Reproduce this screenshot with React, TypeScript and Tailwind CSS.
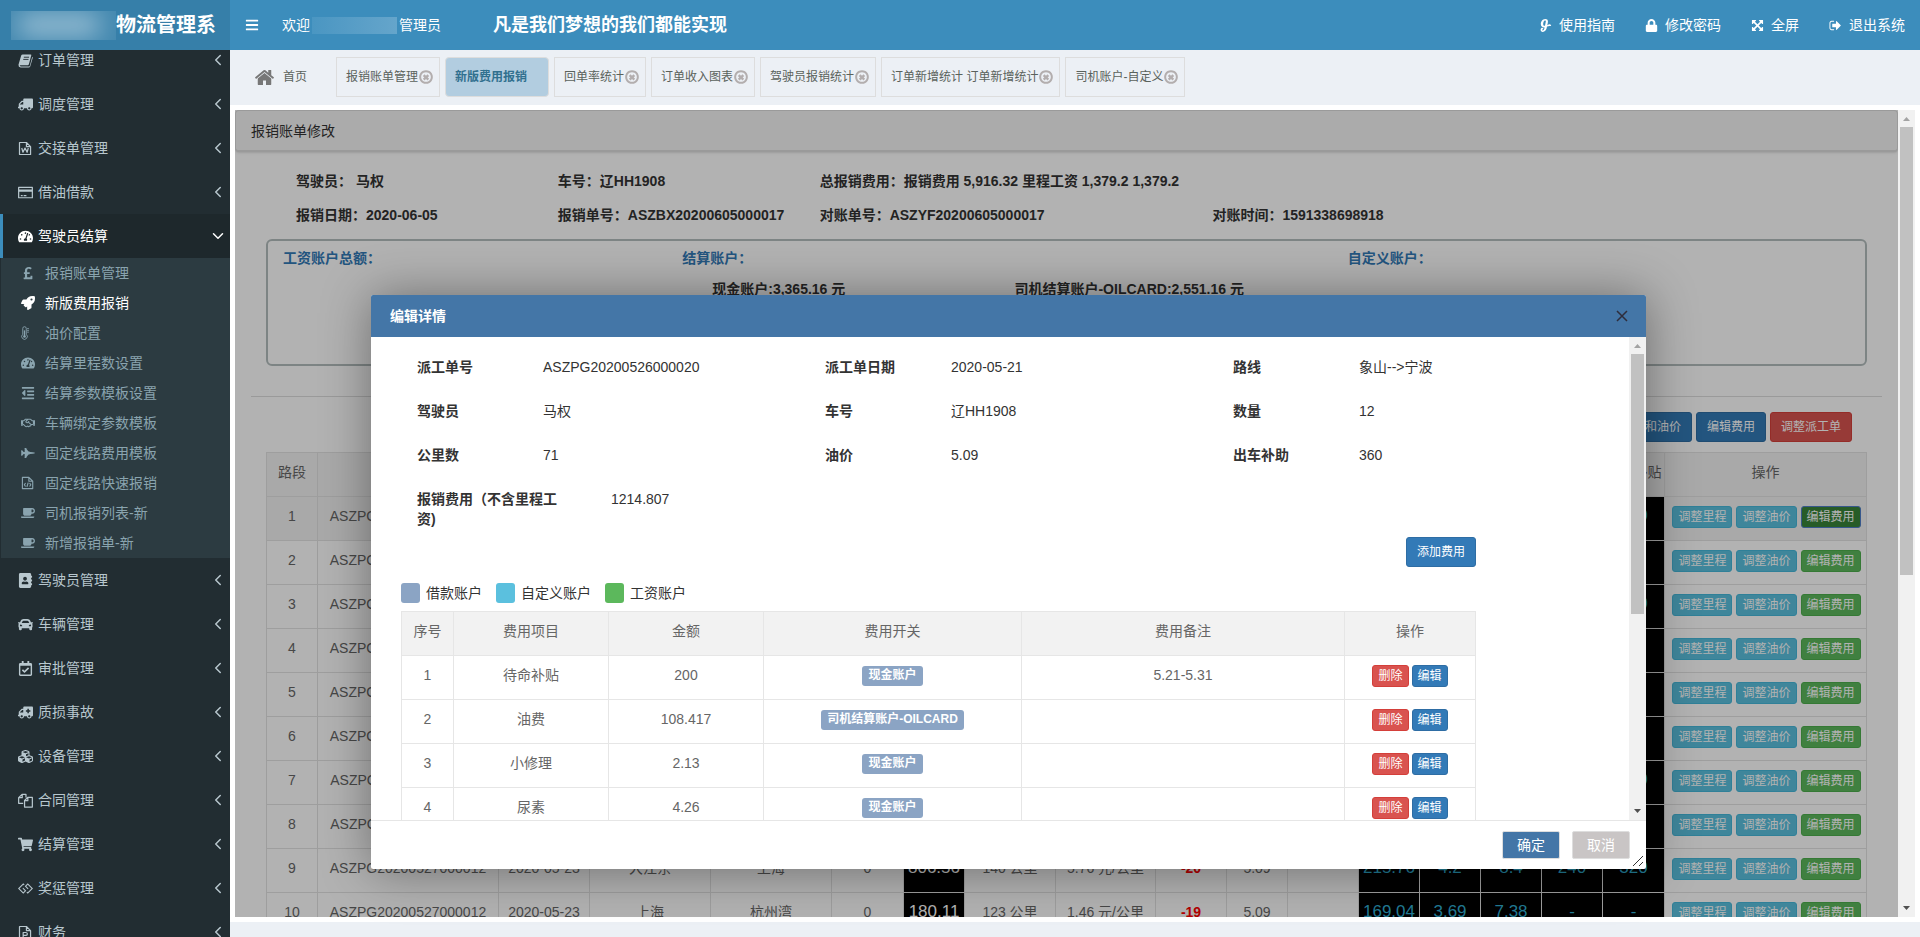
import type { ReactNode } from "react";
import {
  FaAddressBook,
  FaAmbulance,
  FaBars,
  FaCar,
  FaCoffee,
  FaCubes,
  FaFighterJet,
  FaGg,
  FaGlideG,
  FaLock,
  FaOutdent,
  FaPoundSign,
  FaRegCalendarCheck,
  FaRegHandshake,
  FaRocket,
  FaShoppingCart,
  FaTachometerAlt,
  FaTruck,
} from "react-icons/fa";
import { ChevronDown, ChevronLeft } from "lucide-react";

type IconProps = { className?: string };
type MenuItem = { label: string; icon: (props: IconProps) => ReactNode };

function SolidIcon({ className, d }: IconProps & { d: string }) {
  return (
    <svg viewBox="0 0 1792 1792" className={className} fill="currentColor" aria-hidden="true">
      <path d={d} />
    </svg>
  );
}

function LineIcon({ className, d }: IconProps & { d: string }) {
  return (
    <svg
      viewBox="0 0 16 16"
      className={className}
      fill="none"
      stroke="currentColor"
      strokeWidth="1.3"
      strokeLinejoin="round"
      aria-hidden="true"
    >
      <path d={d} />
    </svg>
  );
}

const HomeIcon = ({ className }: IconProps) => (
  <SolidIcon
    className={className}
    d="M1472 992v480q0 26-19 45t-45 19h-384v-384h-256v384h-384q-26 0-45-19t-19-45v-480q0-1 .5-3t.5-3l575-474 575 474q1 2 1 6zm223-69l-62 74q-8 9-21 11h-3q-13 0-21-7l-692-577-692 577q-12 8-24 7-13-2-21-11l-62-74q-8-10-7-23.500t11-21.500l719-599q32-26 76-26t76 26l244 204v-195q0-14 9-23t23-9h192q14 0 23 9t9 23v408l219 182q10 8 11 21.500t-7 23.500z"
  />
);

const CloseCircleIcon = ({ className }: IconProps) => (
  <SolidIcon
    className={className}
    d="M1225 1121l-146 146q-10 10-23 10t-23-10l-137-137-137 137q-10 10-23 10t-23-10l-146-146q-10-10-10-23t10-23l137-137-137-137q-10-10-10-23t10-23l146-146q10-10 23-10t23 10l137 137 137-137q10-10 23-10t23 10l146 146q10 10 10 23t-10 23l-137 137 137 137q10 10 10 23t-10 23zm215-225q0-148-73-273t-198-198-273-73-273 73-198 198-73 273 73 273 198 198 273 73 273-73 198-198 73-273zm224 0q0 209-103 385.500t-279.500 279.500-385.500 103-385.500-103-279.500-279.500-103-385.500 103-385.500 279.500-279.500 385.500-103 385.500 103 279.500 279.500 103 385.500z"
  />
);

const FullScreenIcon = ({ className }: IconProps) => (
  <SolidIcon
    className={className}
    d="M1411 541l-355 355 355 355 144-144q29-31 70-14 39 17 39 59v448q0 26-19 45t-45 19h-448q-42 0-59-40-17-39 14-69l144-144-355-355-355 355 144 144q31 30 14 69-17 40-59 40h-448q-26 0-45-19t-19-45v-448q0-42 40-59 39-17 69 14l144 144 355-355-355-355-144 144q-19 19-45 19-12 0-24-5-40-17-40-59v-448q0-26 19-45t45-19h448q42 0 59 40 17 39-14 69l-144 144 355 355 355-355-144-144q-31-30-14-69 17-40 59-40h448q26 0 45 19t19 45v448q0 42-39 59-13 5-25 5-26 0-45-19z"
  />
);

const SignOutIcon = ({ className }: IconProps) => (
  <SolidIcon
    className={className}
    d="M704 1440q0 4 1 20t.5 26.500-3 23.500-10 19.500-20.500 6.500h-320q-119 0-203.500-84.500t-84.500-203.500v-704q0-119 84.500-203.500t203.500-84.500h320q13 0 22.500 9.500t9.500 22.500q0 4 1 20t.5 26.500-3 23.500-10 19.500-20.500 6.500h-320q-66 0-113 47t-47 113v704q0 66 47 113t113 47h312l11.500 1 11.500 3 8 5.500 7 9 2 13.500zm928-544q0 26-19 45l-544 544q-19 19-45 19t-45-19-19-45v-288h-448q-26 0-45-19t-19-45v-384q0-26 19-45t45-19h448v-288q0-26 19-45t45-19 45 19l544 544q19 19 19 45z"
  />
);

const BookIcon = ({ className }: IconProps) => (
  <svg viewBox="0 0 16 16" className={className} aria-hidden="true">
    <path d="M5 1.500h8.500q1 0 .7 1L11.600 12q-.3 1-1.300 1H2.500q-.8 0-.5.7t1.200.8h8.200q.9 0 1.200-1L15.200 4q.8.5.5 1.400L13 14.300q-.4 1.200-1.600 1.200H2.800Q.3 15.200.5 12.500L3.400 2.700Q3.800 1.500 5 1.500z" fill="currentColor" />
    <path d="M6.200 4.500h5.600M5.600 6.800h5.600" stroke="#222d32" fill="none" />
  </svg>
);

const FileWordIcon = ({ className }: IconProps) => (
  <LineIcon className={className} d="M1.600 1.600h7.400l4.400 4.400v8.400H1.600zM9 1.600V6h4.400M4 7.500l1.300 4.500 2.200-4.500 2.200 4.500L11 7.500" />
);

const FileCodeIcon = ({ className }: IconProps) => (
  <LineIcon className={className} d="M1.600 1.600h7.400l4.400 4.400v8.400H1.600zM9 1.600V6h4.400M5.200 8L3.800 10l1.400 2M9.800 8l1.400 2-1.400 2M8.200 7.500l-1.400 5" />
);

const FileMoneyIcon = ({ className }: IconProps) => (
  <LineIcon className={className} d="M1.600 1.600h7.400l4.400 4.400v8.400H1.600zM9 1.600V6h4.400M5.500 13V8h3q1.500.2 1.500 1.500T8.500 11h-3" />
);

const CardIcon = ({ className }: IconProps) => (
  <LineIcon className={className} d="M.7 2.600h14.600v11H.7zM.7 5.500h14.600M.7 6.500h14.600M3 11.300h2M6 11.300h3" />
);

const CopyIcon = ({ className }: IconProps) => (
  <LineIcon className={className} d="M5.500 11H.7V5l3.600-3.600h4.200v3.400M4.500 1.600V5H.8M7 15V8l3.300-3.300h5V15zM10.500 4.800V8.200H7" />
);

const ThermometerIcon = ({ className }: IconProps) => (
  <svg viewBox="0 0 16 16" className={className} fill="none" stroke="currentColor" aria-hidden="true">
    <path d="M2 9.500V2.800a2 2 0 0 1 4 0v6.700a3.200 3.200 0 1 1-4 0zM7 3h2M7 5h2M7 7h2" />
    <path d="M4 5v7" strokeWidth="1.500" />
    <circle cx="4" cy="12" r="1.500" fill="currentColor" stroke="none" />
  </svg>
);

// delivery vehicles drive to the left in the menu
const TruckIcon = ({ className }: IconProps) => <FaTruck className={`${className} -scale-x-100`} />;
const AmbulanceIcon = ({ className }: IconProps) => (
  <FaAmbulance className={`${className} -scale-x-100`} />
);

const MENU_TOP: MenuItem[] = [
  { label: "订单管理", icon: BookIcon },
  { label: "调度管理", icon: TruckIcon },
  { label: "交接单管理", icon: FileWordIcon },
  { label: "借油借款", icon: CardIcon },
];

const SUBMENU: MenuItem[] = [
  { label: "报销账单管理", icon: FaPoundSign },
  { label: "新版费用报销", icon: FaRocket },
  { label: "油价配置", icon: ThermometerIcon },
  { label: "结算里程数设置", icon: FaTachometerAlt },
  { label: "结算参数模板设置", icon: FaOutdent },
  { label: "车辆绑定参数模板", icon: FaRegHandshake },
  { label: "固定线路费用模板", icon: FaFighterJet },
  { label: "固定线路快速报销", icon: FileCodeIcon },
  { label: "司机报销列表-新", icon: FaCoffee },
  { label: "新增报销单-新", icon: FaCoffee },
];

const MENU_BOTTOM: MenuItem[] = [
  { label: "驾驶员管理", icon: FaAddressBook },
  { label: "车辆管理", icon: FaCar },
  { label: "审批管理", icon: FaRegCalendarCheck },
  { label: "质损事故", icon: AmbulanceIcon },
  { label: "设备管理", icon: FaCubes },
  { label: "合同管理", icon: CopyIcon },
  { label: "结算管理", icon: FaShoppingCart },
  { label: "奖惩管理", icon: FaGg },
  { label: "财务", icon: FileMoneyIcon },
];

const HEADER_LINKS: MenuItem[] = [
  { label: "使用指南", icon: FaGlideG },
  { label: "修改密码", icon: FaLock },
  { label: "全屏", icon: FullScreenIcon },
  { label: "退出系统", icon: SignOutIcon },
];

const TABS = [
  "报销账单管理",
  "新版费用报销",
  "回单率统计",
  "订单收入图表",
  "驾驶员报销统计",
  "订单新增统计 订单新增统计",
  "司机账户-自定义",
];

const ACTIVE = "新版费用报销";

const TRIP_COLUMNS = [
  { title: "路段", width: "w-[51px]" },
  { title: "派工单号", width: "w-[181px]" },
  { title: "派工日期", width: "w-[91px]" },
  { title: "起点", width: "w-[121px]" },
  { title: "终点", width: "w-[121px]" },
  { title: "数量", width: "w-[72px]" },
  { title: "费用", width: "w-[61px]" },
  { title: "里程", width: "w-[91px]" },
  { title: "单价", width: "w-[100px]" },
  { title: "差额", width: "w-[71px]" },
  { title: "油价", width: "w-[61px]" },
  { title: "备注", width: "w-[71px]" },
  { title: "油费", width: "w-[61px]" },
  { title: "尿素", width: "w-[61px]" },
  { title: "小修理", width: "w-[61px]" },
  { title: "补贴", width: "w-[61px]" },
  { title: "出车补贴", width: "w-[62px]" },
  { title: "操作", width: "" },
];

const DARK_COLUMNS = [6, 12, 13, 14, 15, 16];

const TRIPS = [
  ["1", "ASZPG20200526000020", "2020-05-21", "象山", "宁波", "12", "214.80", "71 公里", "3.02 元/公里", "-12", "5.09", "", "108.41", "2.13", "4.26", "200", "360"],
  ["2", "ASZPG20200526000021", "2020-05-21", "宁波", "上海", "0", "380.25", "220 公里", "1.72 元/公里", "-15", "5.09", "", "335.94", "6.6", "13.2", "-", "-"],
  ["3", "ASZPG20200526000022", "2020-05-21", "上海", "宁波", "12", "580.25", "220 公里", "2.63 元/公里", "-15", "5.09", "", "335.94", "6.6", "13.2", "200", "360"],
  ["4", "ASZPG20200526000023", "2020-05-22", "宁波", "杭州湾", "0", "98.60", "65 公里", "1.51 元/公里", "-8", "5.09", "", "92.8", "1.95", "3.9", "-", "-"],
  ["5", "ASZPG20200526000024", "2020-05-22", "杭州湾", "上海", "0", "180.11", "123 公里", "1.46 元/公里", "-19", "5.09", "", "169.04", "3.69", "7.38", "-", "-"],
  ["6", "ASZPG20200527000010", "2020-05-22", "上海", "象山", "0", "302.50", "210 公里", "1.44 元/公里", "-22", "5.09", "", "290.1", "6.3", "12.6", "-", "-"],
  ["7", "ASZPG20200527000011", "2020-05-22", "象山", "宁波", "12", "614.80", "71 公里", "8.65 元/公里", "-12", "5.09", "", "108.41", "2.13", "4.26", "200", "360"],
  ["8", "ASZPG20200527000011", "2020-05-23", "宁波", "大江东", "0", "230.40", "150 公里", "1.53 元/公里", "-16", "5.09", "", "219.9", "4.5", "9", "-", "-"],
  ["9", "ASZPG20200527000012", "2020-05-23", "大江东", "上海", "0", "806.56", "140 公里", "5.76 元/公里", "-20", "5.09", "", "215.76", "4.2", "8.4", "240", "320"],
  ["10", "ASZPG20200527000012", "2020-05-23", "上海", "杭州湾", "0", "180.11", "123 公里", "1.46 元/公里", "-19", "5.09", "", "169.04", "3.69", "7.38", "-", "-"],
];

const DETAIL_FIELDS = [
  ["派工单号", "ASZPG20200526000020"],
  ["派工单日期", "2020-05-21"],
  ["路线", "象山-->宁波"],
  ["驾驶员", "马权"],
  ["车号", "辽HH1908"],
  ["数量", "12"],
  ["公里数", "71"],
  ["油价", "5.09"],
  ["出车补助", "360"],
];

const LEGEND = [
  { label: "借款账户", color: "bg-[#8ba4c4]" },
  { label: "自定义账户", color: "bg-[#5bc0de]" },
  { label: "工资账户", color: "bg-[#5cb85c]" },
];

const FEE_COLUMNS = [
  { title: "序号", width: "w-[52px]" },
  { title: "费用项目", width: "w-[155px]" },
  { title: "金额", width: "w-[155px]" },
  { title: "费用开关", width: "w-[258px]" },
  { title: "费用备注", width: "" },
  { title: "操作", width: "w-[131px]" },
];

const FEES = [
  { name: "待命补贴", amount: "200", account: "现金账户", note: "5.21-5.31" },
  { name: "油费", amount: "108.417", account: "司机结算账户-OILCARD", note: "" },
  { name: "小修理", amount: "2.13", account: "现金账户", note: "" },
  { name: "尿素", amount: "4.26", account: "现金账户", note: "" },
];

const BUTTON_COLORS = {
  primary: "border-[#2e6da4] bg-[#337ab7]",
  danger: "border-[#d43f3a] bg-[#d9534f]",
  info: "border-[#46b8da] bg-[#5bc0de]",
  success: "border-[#4cae4c] bg-[#5cb85c]",
  pressed: "border-[#4f7fc9] bg-[#398439]",
};

function Button({
  color,
  small,
  children,
}: {
  color: keyof typeof BUTTON_COLORS;
  small?: boolean;
  children: ReactNode;
}) {
  const size = small ? "h-[22px] px-[5px]" : "h-[30px] px-2.5";
  return (
    <button
      type="button"
      className={`${size} ${BUTTON_COLORS[color]} rounded-[3px] border text-xs whitespace-nowrap text-white`}
    >
      {children}
    </button>
  );
}

function Scrollbar() {
  return (
    <div className="flex w-[17px] shrink-0 flex-col bg-[#f1f1f1]" aria-hidden="true">
      <svg viewBox="0 0 17 17" className="h-[17px] w-[17px] shrink-0">
        <path d="M5 11h7L8.500 7z" fill="#a3a3a3" />
      </svg>
      <div className="min-h-0 flex-1 px-0.5">
        <div className="h-[58%] bg-[#c1c1c1]" />
      </div>
      <svg viewBox="0 0 17 17" className="h-[17px] w-[17px] shrink-0">
        <path d="M5 6h7l-3.500 4z" fill="#505050" />
      </svg>
    </div>
  );
}

function MenuLink({ item, open }: { item: MenuItem; open?: boolean }) {
  const Icon = item.icon;
  const Arrow = open ? ChevronDown : ChevronLeft;
  const tone = open
    ? "border-[#3c8dbc] bg-[#1e282c] text-white"
    : "border-transparent text-[#b8c7ce]";
  return (
    <a href="#" className={`${tone} flex h-11 items-center border-l-[3px] pr-[3px] pl-[15px]`}>
      <span className="w-5">
        <Icon className="h-[15px] w-[15px]" />
      </span>
      <span className="flex-1">{item.label}</span>
      <Arrow size={18} />
    </a>
  );
}

function Sidebar() {
  return (
    <aside className="flex w-[230px] shrink-0 flex-col bg-[#222d32]">
      <div className="z-10 flex h-[50px] shrink-0 items-center justify-end bg-[#367fa9] pr-3.5">
        <div className="h-[29px] w-[105px] overflow-hidden bg-[#4489b0]">
          <div className="mt-1 ml-2 h-5 w-20 bg-white/50 blur-md" />
        </div>
        <span className="text-xl font-bold whitespace-nowrap text-white">物流管理系</span>
      </div>
      <nav className="min-h-0 flex-1 overflow-hidden">
        <div className="-mt-3">
          {MENU_TOP.map((item) => (
            <MenuLink key={item.label} item={item} />
          ))}
          <MenuLink item={{ label: "驾驶员结算", icon: FaTachometerAlt }} open />
          <div className="ml-px bg-[#2c3b41]">
            {SUBMENU.map((item) => (
              <a
                key={item.label}
                href="#"
                className={`${item.label === ACTIVE ? "text-white" : "text-[#8aa4af]"} flex h-[30px] items-center pl-5`}
              >
                <span className="w-6">
                  <item.icon className="h-3.5 w-auto" />
                </span>
                {item.label}
              </a>
            ))}
          </div>
          {MENU_BOTTOM.map((item) => (
            <MenuLink key={item.label} item={item} />
          ))}
        </div>
      </nav>
    </aside>
  );
}

function Header() {
  return (
    <header className="flex h-[50px] shrink-0 items-center bg-[#3c8dbc] text-white">
      <button type="button" aria-label="菜单" className="px-[15px]">
        <FaBars size={14} />
      </button>
      <div className="ml-2 flex items-center">
        欢迎
        <span className="mx-0.5 h-[17px] w-[85px] bg-linear-to-r from-[#4a96c2] to-[#65a5cb]" />
        管理员
      </div>
      <p className="ml-[52px] text-lg font-bold">凡是我们梦想的我们都能实现</p>
      <nav className="ml-auto flex">
        {HEADER_LINKS.map(({ label, icon: Icon }) => (
          <a key={label} href="#" className="flex items-center gap-[7px] px-[15px]">
            <Icon className="h-[13px] w-auto" />
            {label}
          </a>
        ))}
      </nav>
    </header>
  );
}

function TabBar() {
  return (
    <div className="flex h-[55px] shrink-0 items-start gap-[5px] bg-[#ecf0f5] pt-[7px] pl-6 text-xs text-[#5a625c]">
      <a href="#" className="mr-6 flex h-10 items-center gap-2">
        <HomeIcon className="h-[21px] w-[21px] text-[#777]" />
        首页
      </a>
      {TABS.map((tab) => (
        <a
          key={tab}
          href="#"
          className={`${tab === ACTIVE ? "rounded bg-[#b2cde0] font-bold text-[#31708f]" : ""} flex h-10 items-center border border-[#ddd] pr-[5px] pl-[9px] whitespace-nowrap`}
        >
          {tab}
          <CloseCircleIcon
            className={`${tab === ACTIVE ? "invisible" : ""} h-4 w-4 text-[#b3aeae]`}
          />
        </a>
      ))}
    </div>
  );
}

function TripTable() {
  return (
    <table className="mt-2.5 w-full table-fixed border-collapse text-center text-[#666]">
      <thead>
        <tr className="h-11 bg-[#f2f2f2]">
          {TRIP_COLUMNS.map(({ title, width }) => (
            <th
              key={title}
              className={`${width} border border-[#e2e2e2] pt-[9px] align-top leading-5 font-normal whitespace-nowrap`}
            >
              {title}
            </th>
          ))}
        </tr>
      </thead>
      <tbody>
        {TRIPS.map((row, index) => (
          <tr key={row[0]} className={`${index === 0 ? "bg-[#f2f2f2]" : ""} h-11`}>
            {row.map((cell, col) => {
              let tone = "";
              if (DARK_COLUMNS.includes(col)) {
                tone = col === 6 ? "bg-black text-[17px] text-white" : "bg-black text-[17px] text-[#31b0d5]";
              } else if (col === 9) {
                tone = "font-bold text-[#f00]";
              }
              return (
                <td
                  key={col}
                  className={`${tone} border border-[#e2e2e2] pt-[9px] align-top leading-5 whitespace-nowrap`}
                >
                  {cell}
                </td>
              );
            })}
            <td className="border border-[#e2e2e2] pt-[9px] align-top">
              <div className="flex justify-center gap-1 pl-0.5">
                <Button color="info" small>调整里程</Button>
                <Button color="info" small>调整油价</Button>
                <Button color={index === 0 ? "pressed" : "success"} small>编辑费用</Button>
              </div>
            </td>
          </tr>
        ))}
      </tbody>
    </table>
  );
}

function ReportPage() {
  return (
    <div className="min-w-0 flex-1 overflow-hidden">
      <h1 className="flex h-[42px] items-center rounded border border-b-2 border-[#ddd] bg-[#f5f5f5] pl-[15px] shadow-sm">
        报销账单修改
      </h1>
      <div className="px-[31px]">
        <div className="grid grid-cols-12 gap-y-3.5 px-[15px] pt-[19px] leading-5 font-bold whitespace-nowrap">
          <div className="col-span-2 pl-[15px]">驾驶员： 马权</div>
          <div className="col-span-2 pl-[15px]">车号：辽HH1908</div>
          <div className="col-span-8 pl-[15px]">总报销费用：报销费用 5,916.32 里程工资 1,379.2 1,379.2</div>
          <div className="col-span-2 pl-[15px]">报销日期：2020-06-05</div>
          <div className="col-span-2 pl-[15px]">报销单号：ASZBX20200605000017</div>
          <div className="col-span-3 pl-[15px]">对账单号：ASZYF20200605000017</div>
          <div className="col-span-5 pl-[15px]">对账时间：1591338698918</div>
        </div>
        <section className="mt-3.5 grid h-[127px] grid-cols-12 content-start rounded-md border-2 border-[#b4bebe] pt-[7px] leading-5 font-bold whitespace-nowrap">
          <h2 className="col-span-3 pl-[15px] text-[#337ab7]">工资账户总额：</h2>
          <div className="col-span-5 pl-[15px]">
            <h2 className="text-[#337ab7]">结算账户：</h2>
            <div className="mt-[11px] grid grid-cols-2 pr-4 pl-[30px]">
              <p>现金账户:3,365.16 元</p>
              <p>司机结算账户-OILCARD:2,551.16 元</p>
            </div>
          </div>
          <h2 className="col-span-4 pl-[15px] text-[#337ab7]">自定义账户：</h2>
        </section>
      </div>
      <hr className="mx-4 mt-[30px] border-[#ddd]" />
      <div className="px-[31px]">
        <div className="mt-[15px] flex justify-end gap-1 pr-[15px]">
          <Button color="primary">调整里程和油价</Button>
          <Button color="primary">编辑费用</Button>
          <Button color="danger">调整派工单</Button>
        </div>
        <TripTable />
      </div>
    </div>
  );
}

function EditDialog() {
  return (
    <div
      role="dialog"
      aria-label="编辑详情"
      className="absolute top-[185px] right-[269px] bottom-[48px] left-[136px] flex flex-col overflow-hidden rounded-xs bg-white shadow-[1px_1px_50px_rgba(0,0,0,0.4)]"
    >
      <div className="flex h-[42px] shrink-0 items-center justify-between bg-[#4476a7] pr-4 pl-[19px]">
        <h2 className="font-bold text-white">编辑详情</h2>
        <button type="button" aria-label="关闭">
          <svg viewBox="0 0 16 16" className="h-4 w-4" stroke="#2e2d3c" strokeWidth="1.500">
            <path d="M3 3l10 10M13 3L3 13" />
          </svg>
        </button>
      </div>

      <div className="flex min-h-0 flex-1 border-b border-[#e6e6e6]">
        <div className="min-w-0 flex-1 overflow-hidden pt-5 pl-[30px]">
          <dl className="-mr-3 grid grid-cols-3 gap-y-6 pl-4 leading-5">
            {DETAIL_FIELDS.map(([label, value]) => (
              <div key={label} className="flex">
                <dt className="w-[126px] font-bold">{label}</dt>
                <dd>{value}</dd>
              </div>
            ))}
            <div className="flex">
              <dt className="mr-10 w-[154px] font-bold">报销费用（不含里程工资)</dt>
              <dd>1214.807</dd>
            </div>
          </dl>

          <div className="pr-[153px]">
            <div className="mt-2 flex justify-end">
              <Button color="primary">添加费用</Button>
            </div>
            <ul className="mt-4 flex gap-3.5">
              {LEGEND.map(({ label, color }) => (
                <li key={label} className="flex items-center gap-1.5 leading-5">
                  <span className={`${color} h-5 w-[19px] rounded-[3px]`} />
                  {label}
                </li>
              ))}
            </ul>
            <table className="mt-2 w-full table-fixed border-collapse text-center text-[#666]">
              <thead>
                <tr className="h-11 bg-[#f2f2f2]">
                  {FEE_COLUMNS.map(({ title, width }) => (
                    <th
                      key={title}
                      className={`${width} border border-[#e6e6e6] pt-[9px] align-top leading-5 font-normal`}
                    >
                      {title}
                    </th>
                  ))}
                </tr>
              </thead>
              <tbody>
                {FEES.map((fee, index) => (
                  <tr key={fee.name} className="h-11 leading-5">
                    <td className="border border-[#e6e6e6] pt-[9px] align-top">{index + 1}</td>
                    <td className="border border-[#e6e6e6] pt-[9px] align-top">{fee.name}</td>
                    <td className="border border-[#e6e6e6] pt-[9px] align-top">{fee.amount}</td>
                    <td className="border border-[#e6e6e6] pt-2.5 align-top">
                      <span className="mx-auto block h-5 w-fit rounded-[3px] bg-[#8ba4c4] px-1.5 text-xs leading-[18px] font-bold text-white">
                        {fee.account}
                      </span>
                    </td>
                    <td className="border border-[#e6e6e6] pt-[9px] align-top">{fee.note}</td>
                    <td className="border border-[#e6e6e6] pt-[9px] align-top">
                      <div className="flex justify-center gap-[3px]">
                        <Button color="danger" small>删除</Button>
                        <Button color="primary" small>编辑</Button>
                      </div>
                    </td>
                  </tr>
                ))}
              </tbody>
            </table>
          </div>
        </div>
        <Scrollbar />
      </div>

      <div className="flex h-12 shrink-0 items-center justify-end gap-3 pr-4">
        <button type="button" className="h-7 w-[58px] rounded-xs border border-[#dedede] bg-[#4476a7] text-white">
          确定
        </button>
        <button type="button" className="h-7 w-[58px] rounded-xs border border-[#dedede] bg-[#c9c5c5] text-white">
          取消
        </button>
      </div>
      <svg viewBox="0 0 12 12" className="absolute right-0.5 bottom-0.5 h-3 w-3" stroke="#333">
        <path d="M1 11L11 1M7 11l4-4" />
      </svg>
    </div>
  );
}

export default function App() {
  return (
    <div className="flex h-screen overflow-hidden bg-[#ecf0f5] font-['Liberation_Sans','Noto_Sans_CJK_SC',sans-serif] text-sm text-[#333]">
      <Sidebar />
      <div className="flex min-w-0 flex-1 flex-col">
        <Header />
        <TabBar />
        <main className="mb-[15px] flex min-h-0 flex-1 bg-white p-[5px]">
          <div className="relative flex min-w-0 flex-1">
            <div className="relative flex min-w-0 flex-1">
              <ReportPage />
              <div className="absolute inset-0 bg-black/30" />
            </div>
            <EditDialog />
            <Scrollbar />
          </div>
        </main>
      </div>
    </div>
  );
}
